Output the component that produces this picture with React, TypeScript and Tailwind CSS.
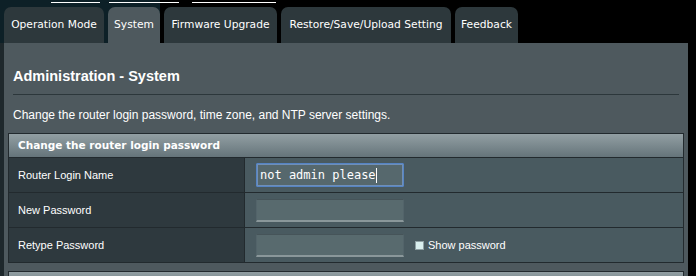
import React from "react";

const tabs = [
  { label: "Operation Mode", w: "w-[100px]" },
  { label: "System", w: "w-[52px]", active: true },
  { label: "Firmware Upgrade", w: "w-[113px]" },
  { label: "Restore/Save/Upload Setting", w: "w-[170px]" },
  { label: "Feedback", w: "w-[63px]" },
];

const Field = ({ value, focused }: { value?: string; focused?: boolean }) => (
  <div
    className={
      focused
        ? "w-[148px] h-[24px] flex items-center px-[3px] bg-[#56686d] border border-[#5584c4] rounded-[1px] shadow-[inset_0_0_0_1px_#6f8fb8]"
        : "w-[148px] h-[23px] bg-[#586a6e] border-t border-t-[#465459] border-x border-x-[#53646a] border-b-2 border-b-[#8a979a]"
    }
  >
    {value && (
      <span className="font-['DejaVu_Sans_Mono',monospace] text-[12px] leading-none text-white">{value}</span>
    )}
    {focused && <span className="w-px h-[15px] bg-white" />}
  </div>
);

const Row = ({ label, children }: { label: string; children: React.ReactNode }) => (
  <div className="flex h-[35px] border-b border-[#222a2e]">
    <div className="w-[236px] shrink-0 bg-[#2e393e] border-r border-[#222a2e] flex items-center pl-[9px] font-['Liberation_Sans',Arial,sans-serif] text-[11px] text-white">
      {label}
    </div>
    <div className="flex-1 bg-[#495a60] flex items-center pl-[11px]">{children}</div>
  </div>
);

export default function App() {
  return (
    <div className="w-[696px] h-[276px] bg-black overflow-hidden flex flex-col">
      <div className="relative h-[43px] shrink-0 flex items-end gap-[4px] pl-[4px] bg-[linear-gradient(to_right,#0d2027_160px,#000_160px)]">
        <div className="absolute top-[2px] left-[51px] w-[49px] h-px bg-white" />
        <div className="absolute top-[2px] left-[109px] w-[70px] h-px bg-white" />
        <div className="absolute top-[2px] left-[192px] w-[84px] h-px bg-white" />
        {tabs.map((t) => (
          <div
            key={t.label}
            className={`${t.w} h-[36px] rounded-t-[7px] flex items-center justify-center font-['DejaVu_Sans',Verdana,sans-serif] text-[10.7px] text-white ${
              t.active ? "bg-[#4e595e]" : "bg-[#2d383c]"
            }`}
          >
            {t.label}
          </div>
        ))}
      </div>

      <div className="flex flex-1">
        <div className="w-[4px] bg-[#1e282c]" />
        <div className="w-[684px] bg-[#4e595e] flex flex-col">
          <div className="mx-[9px] pt-[24px] font-['Liberation_Sans',Arial,sans-serif] font-bold text-[14.5px] leading-[18px] text-white">
            Administration - System
          </div>
          <div className="mx-[9px] mt-[9px] h-px bg-[#2c373b]" />
          <div className="mx-[9px] mt-[13px] font-['Liberation_Sans',Arial,sans-serif] text-[12px] leading-[14px] text-white">
            Change the router login password, time zone, and NTP server settings.
          </div>

          <div className="mx-[4px] mt-[11px] border-x border-t border-[#222a2e]">
            <div className="h-[24px] flex items-center pl-[9px] border-b border-[#222a2e] bg-[linear-gradient(to_bottom,#929fa3,#65747a)] font-['DejaVu_Sans',Verdana,sans-serif] font-bold text-[10.5px] text-white">
              Change the router login password
            </div>
            <Row label="Router Login Name">
              <Field value="not admin please" focused />
            </Row>
            <Row label="New Password">
              <Field />
            </Row>
            <Row label="Retype Password">
              <Field />
              <div className="ml-[11px] flex items-center gap-[4px] font-['Liberation_Sans',Arial,sans-serif] text-[11px] text-white">
                <span className="w-[9px] h-[9px] bg-[#d9efef] border border-[#8fa0a4]" />
                Show password
              </div>
            </Row>
          </div>

          <div className="mx-[4px] mt-[8px] h-[20px] border border-[#222a2e] bg-[linear-gradient(to_bottom,#929fa3,#65747a)]" />
        </div>
      </div>
    </div>
  );
}
